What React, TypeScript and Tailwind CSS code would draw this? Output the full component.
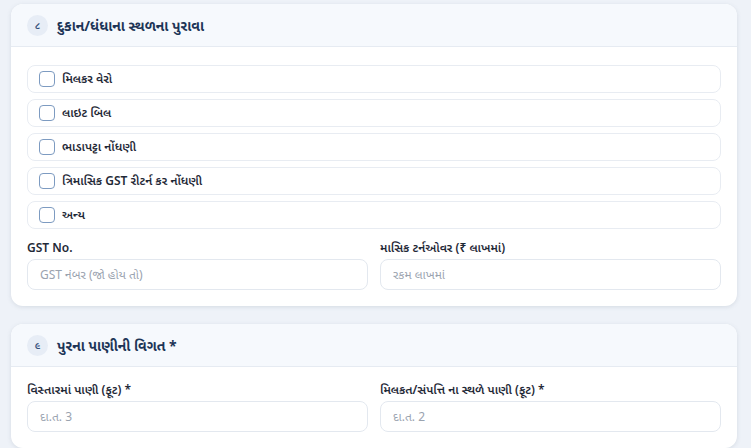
import React from 'react';

const font = { fontFamily: '"Noto Sans", "Noto Sans Gujarati", "Lohit Gujarati", sans-serif' };

const proofs = ['મિલકર વેરો', 'લાઇટ બિલ', 'ભાડાપટ્ટા નોંધણી', 'ત્રિમાસિક GST રીટર્ન કર નોંધણી', 'અન્ય'];

function SectionHeader({ num, title }: { num: string; title: string }) {
  return (
    <div className="flex h-[43px] items-center gap-[9px] border-b border-[#e6ebf2] bg-[#f6f9fd] px-4">
      <span className="flex h-[21px] w-[21px] items-center justify-center rounded-full bg-[#e7edf6] text-[10px] font-semibold text-[#34507a]">
        {num}
      </span>
      <span className="text-[14px] font-bold text-[#1d3557]">{title}</span>
    </div>
  );
}

function Field({ label, placeholder }: { label: string; placeholder: string }) {
  return (
    <div className="flex flex-col gap-1">
      <label className="text-[12px] font-semibold leading-[14px] text-[#1f2937]">{label}</label>
      <input
        placeholder={placeholder}
        className="h-[31px] w-full rounded-lg border border-[#e3e8ef] bg-white px-3 text-[12px] text-[#1f2937] placeholder:text-[#9aa3af] outline-none"
        style={font}
      />
    </div>
  );
}

export default function App() {
  return (
    <div className="min-h-[448px] bg-[#eef2f8] pt-1 pb-6" style={font}>
      <div className="ml-[11px] w-[726px] overflow-hidden rounded-xl bg-white shadow-[0_1px_4px_rgba(100,116,139,0.18)]">
        <SectionHeader num="૮" title="દુકાન/ધંધાના સ્થળના પુરાવા" />
        <div className="px-4 pt-[18px] pb-4">
          <div className="flex flex-col gap-[6px]">
            {proofs.map(p => (
              <label key={p} className="flex h-[28px] items-center gap-[7px] rounded-lg border border-[#e8ecf2] bg-white px-[11px]">
                <span className="h-4 w-4 rounded-[4px] border-[1.5px] border-[#7d9bc1] bg-white" />
                <span className="text-[12px] font-semibold text-[#1f2937]">{p}</span>
              </label>
            ))}
          </div>
          <div className="mt-[12px] grid grid-cols-2 gap-3">
            <Field label="GST No." placeholder="GST નંબર (જો હોય તો)" />
            <Field label="માસિક ટર્નઓવર (₹ લાખમાં)" placeholder="રકમ લાખમાં" />
          </div>
        </div>
      </div>

      <div className="mt-[18px] ml-[11px] w-[726px] overflow-hidden rounded-xl bg-white shadow-[0_1px_4px_rgba(100,116,139,0.18)]">
        <SectionHeader num="૯" title="પુરના પાણીની વિગત *" />
        <div className="grid grid-cols-2 gap-3 px-4 pt-4 pb-4">
          <Field label="વિસ્તારમાં પાણી (ફૂટ) *" placeholder="દા.ત. 3" />
          <Field label="મિલકત/સંપત્તિ ના સ્થળે પાણી (ફૂટ) *" placeholder="દા.ત. 2" />
        </div>
      </div>
    </div>
  );
}
